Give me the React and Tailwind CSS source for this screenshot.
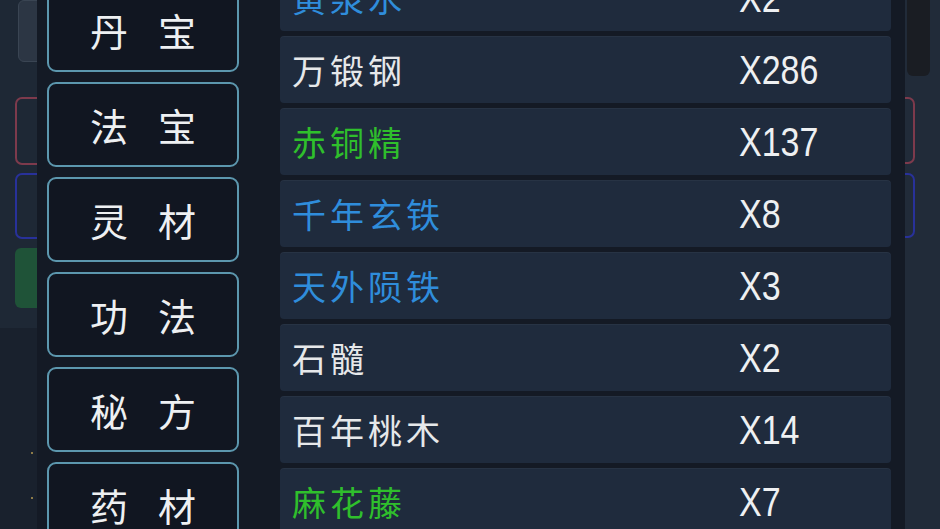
import React from "react";

const cjk = { fontFamily: '"Noto Sans CJK SC", "Noto Sans", sans-serif' };
const latin = { fontFamily: '"Liberation Sans", Arial, sans-serif' };

const tabs = [
  ["丹", "宝"],
  ["法", "宝"],
  ["灵", "材"],
  ["功", "法"],
  ["秘", "方"],
  ["药", "材"],
];

const items = [
  { name: "黄泉水", count: "X2", color: "text-[#2f8ddb]" },
  { name: "万锻钢", count: "X286", color: "text-[#e6e8ea]" },
  { name: "赤铜精", count: "X137", color: "text-[#2fbf2c]" },
  { name: "千年玄铁", count: "X8", color: "text-[#2f8ddb]" },
  { name: "天外陨铁", count: "X3", color: "text-[#2f8ddb]" },
  { name: "石髓", count: "X2", color: "text-[#e6e8ea]" },
  { name: "百年桃木", count: "X14", color: "text-[#e6e8ea]" },
  { name: "麻花藤", count: "X7", color: "text-[#2fbf2c]" },
];

function TabButton({ chars }) {
  return (
    <div className="h-[85px] shrink-0 rounded-[9px] border-2 border-[#5c97ae] bg-[#111621] flex items-center justify-center gap-[30px] text-[38px] leading-none text-[#eef0f2]" style={cjk}>
      <span>{chars[0]}</span>
      <span>{chars[1]}</span>
    </div>
  );
}

function ItemRow({ item }) {
  return (
    <div className="h-[67px] shrink-0 rounded-[4px] bg-[#1f2b3d] flex items-center shadow-[inset_0_1px_0_rgba(255,255,255,0.04)]">
      <div className={`w-[459px] pl-3 text-[34px] leading-none tracking-[4px] ${item.color}`} style={cjk}>
        {item.name}
      </div>
      <div className="text-[40px] leading-none text-[#eef0f2] scale-x-85 origin-left" style={latin}>
        {item.count}
      </div>
    </div>
  );
}

export default function App() {
  return (
    <div className="w-[940px] h-[529px] overflow-hidden flex bg-[#1c2532]">
      {/* game ui behind, left edge */}
      <div className="w-[37px] shrink-0 overflow-hidden flex flex-col bg-[#1e2835]">
        <div className="ml-[18px] w-[30px] h-[62px] rounded-[6px] bg-[#2c3644] border border-[#3a4553]" />
        <div className="ml-[15px] mt-[35px] w-[40px] h-[68px] rounded-[7px] border-2 border-[#7d3a4c]" />
        <div className="ml-[15px] mt-[8px] w-[40px] h-[66px] rounded-[7px] border-2 border-[#28319a]" />
        <div className="ml-[15px] mt-[9px] w-[40px] h-[60px] rounded-[6px] bg-[#1f5338]" />
        <div className="mt-[20px] flex-1 bg-[#19212d] flex flex-col items-end pr-[4px] pt-[124px] gap-[43px]">
          <div className="w-[2px] h-[2px] rounded-full bg-[#b59a52]" />
          <div className="w-[2px] h-[2px] rounded-full bg-[#b59a52]" />
        </div>
      </div>

      {/* overlay panel */}
      <div className="w-[868px] shrink-0 bg-[#141a25] flex pl-[10px]">
        <div className="w-[192px] shrink-0 flex flex-col gap-[10px] mt-[-13px]">
          {tabs.map((t, i) => (
            <TabButton key={i} chars={t} />
          ))}
        </div>
        <div className="ml-[41px] w-[611px] shrink-0 flex flex-col gap-[5px] mt-[-36px]">
          {items.map((it, i) => (
            <ItemRow key={i} item={it} />
          ))}
        </div>
      </div>

      {/* game ui behind, right edge */}
      <div className="flex-1 overflow-hidden flex flex-col bg-[#212b39]">
        <div className="ml-[2px] w-[23px] h-[76px] rounded-b-[6px] bg-[#1a1d23]" />
        <div className="ml-[-20px] mt-[21px] w-[30px] h-[67px] rounded-[7px] border-2 border-[#7d3a4c]" />
        <div className="ml-[-20px] mt-[9px] w-[30px] h-[65px] rounded-[7px] border-2 border-[#28319a]" />
      </div>
    </div>
  );
}
